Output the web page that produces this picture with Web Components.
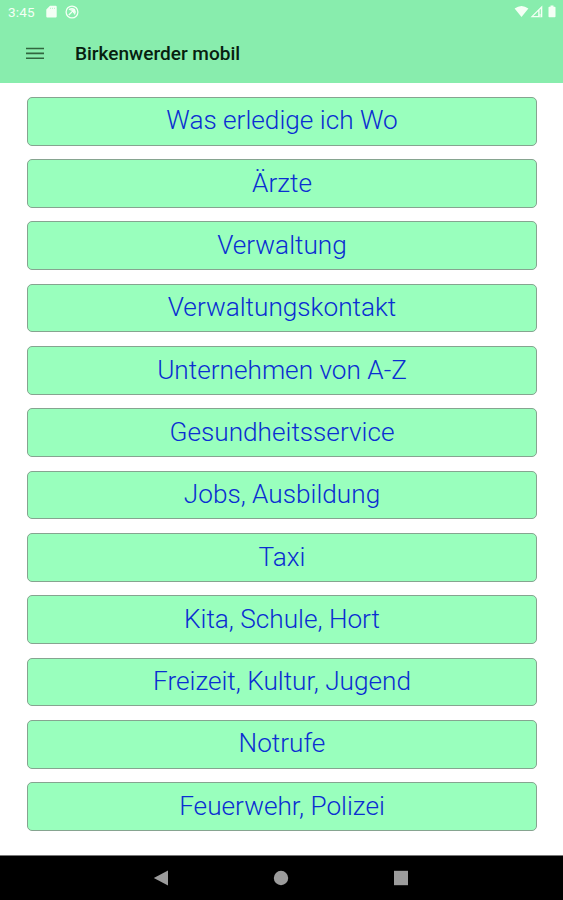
<!DOCTYPE html>
<html lang="de">
<head>
<meta charset="utf-8">
<title>Birkenwerder mobil</title>
<style>
html, body { margin: 0; height: 100%; background: #fff; font-family: Roboto, "Noto Sans", sans-serif; }
</style>
</head>
<body>
<mobil-app></mobil-app>
<script>
const define = (name, markup) => {
  const template = document.createElement('template');
  template.innerHTML = markup;
  customElements.define(name, class extends HTMLElement {
    constructor() {
      super();
      this.attachShadow({ mode: 'open' }).append(template.content.cloneNode(true));
    }
  });
};

define('status-bar', `
<style>
:host { display: flex; align-items: center; height: 24px; box-sizing: border-box; padding: 0 7px 0 8px; color: #f4fff5; font-size: 13.500px; }
svg { display: block; fill: currentColor; }
.time { width: 38px; line-height: 24px; letter-spacing: .15px; }
.left, .right { display: flex; align-items: center; }
.left { gap: 8px; margin-top: -1px; }
.right { margin-left: auto; gap: 1px; margin-top: -2px; }
</style>
<span class="time"><slot></slot></span>
<span class="left">
  <svg width="11" height="13" viewBox="0 0 11 13"><path fill-rule="evenodd" d="M4 .8h5.700q1 0 1 1v9.700q0 1-1 1H1.300q-1 0-1-1V4.500zM4.100 2.800v1.300h.5v-1.300zm2 0v1.300h.5v-1.300zm2 0v1.300h.5v-1.300z"/></svg>
  <svg width="14" height="14" viewBox="0 0 14 14"><g fill="none" stroke="currentColor" stroke-width="1.300"><circle cx="7" cy="7" r="5.900"/><path d="M4 4.600Q7 2.600 9.500 4.500Q11 7 9.500 9.500M3.800 10l4.900-4.900M5.500 5.100h3.200v3.200"/></g></svg>
</span>
<span class="right">
  <svg width="15" height="13" viewBox="0 0 15 13"><path d="M.6 3.500Q7.500-1.500 14.400 3.500L7.500 12z"/></svg>
  <svg width="13" height="13" viewBox="0 0 13 13"><path fill-rule="evenodd" d="M.5 12.300L12.300.5v11.800zM3.400 11.100h4.800V6.300zM9.600 5v4.500h1.200V3.800zM9.600 10.400v1h1.200v-1z"/></svg>
  <svg style="margin-left:4px" width="8" height="13" viewBox="0 0 8 13"><path d="M2.500.4h3v1.300h1.200q.8 0 .8.800v9q0 .8-.8.800H1.300q-.8 0-.8-.8v-9q0-.8.800-.8h1.200z"/></svg>
</span>`);

define('app-bar', `
<style>
:host { display: flex; align-items: center; height: 59px; box-sizing: border-box; padding-left: 26px; color: #06200f; }
.menu { display: block; width: 18px; margin-right: 31px; }
.menu path { stroke: #31663f; stroke-width: 1.600; }
h1 { margin: 0; padding-top: 1px; font-size: 19.050px; line-height: 24px; font-weight: 500; }
</style>
<svg class="menu" width="18" height="13" viewBox="0 0 18 13"><path d="M0 1.500h18M0 6.400h18M0 11.300h18"/></svg>
<h1><slot></slot></h1>`);

define('menu-button', `
<style>
:host { display: block; }
button { display: block; width: 100%; height: 100%; margin: 0; padding: 0 0 1.600px; box-sizing: border-box; border: 1px solid #86a490; border-radius: 5px; background: #99ffbd; color: #0b2ed2; font: 300 26.200px/30px Roboto, "Noto Sans", sans-serif; }
</style>
<button><slot></slot></button>`);

define('nav-bar', `
<style>
:host { display: flex; justify-content: center; align-items: center; gap: 104px; height: 45px; box-sizing: border-box; padding-right: 1px; border-top: 1px solid #777; background: #000; }
svg { display: block; fill: #9c9c9c; }
</style>
<svg width="16" height="18" viewBox="0 0 16 18"><path d="M15 1.400v15.200L.8 9z"/></svg>
<svg width="16" height="16" viewBox="0 0 16 16"><circle cx="8" cy="8" r="7.200"/></svg>
<svg width="16" height="16" viewBox="0 0 16 16"><path d="M1 .800h14v14.400H1z"/></svg>`);

define('mobil-app', `
<style>
:host { display: flex; flex-direction: column; height: 900px; overflow: hidden; }
header { background: #88edad; height: 83px; }
main { flex: 1; display: grid; grid-auto-rows: 48.700px; row-gap: 13.620px; padding: 13.900px 26px 0 27px; }
</style>
<header><status-bar>3:45</status-bar><app-bar>Birkenwerder mobil</app-bar></header>
<main>
<menu-button>Was erledige ich Wo</menu-button>
<menu-button>Ärzte</menu-button>
<menu-button>Verwaltung</menu-button>
<menu-button>Verwaltungskontakt</menu-button>
<menu-button>Unternehmen von A-Z</menu-button>
<menu-button>Gesundheitsservice</menu-button>
<menu-button>Jobs, Ausbildung</menu-button>
<menu-button>Taxi</menu-button>
<menu-button>Kita, Schule, Hort</menu-button>
<menu-button>Freizeit, Kultur, Jugend</menu-button>
<menu-button>Notrufe</menu-button>
<menu-button>Feuerwehr, Polizei</menu-button>
</main>
<nav-bar></nav-bar>`);
</script>
</body>
</html>
